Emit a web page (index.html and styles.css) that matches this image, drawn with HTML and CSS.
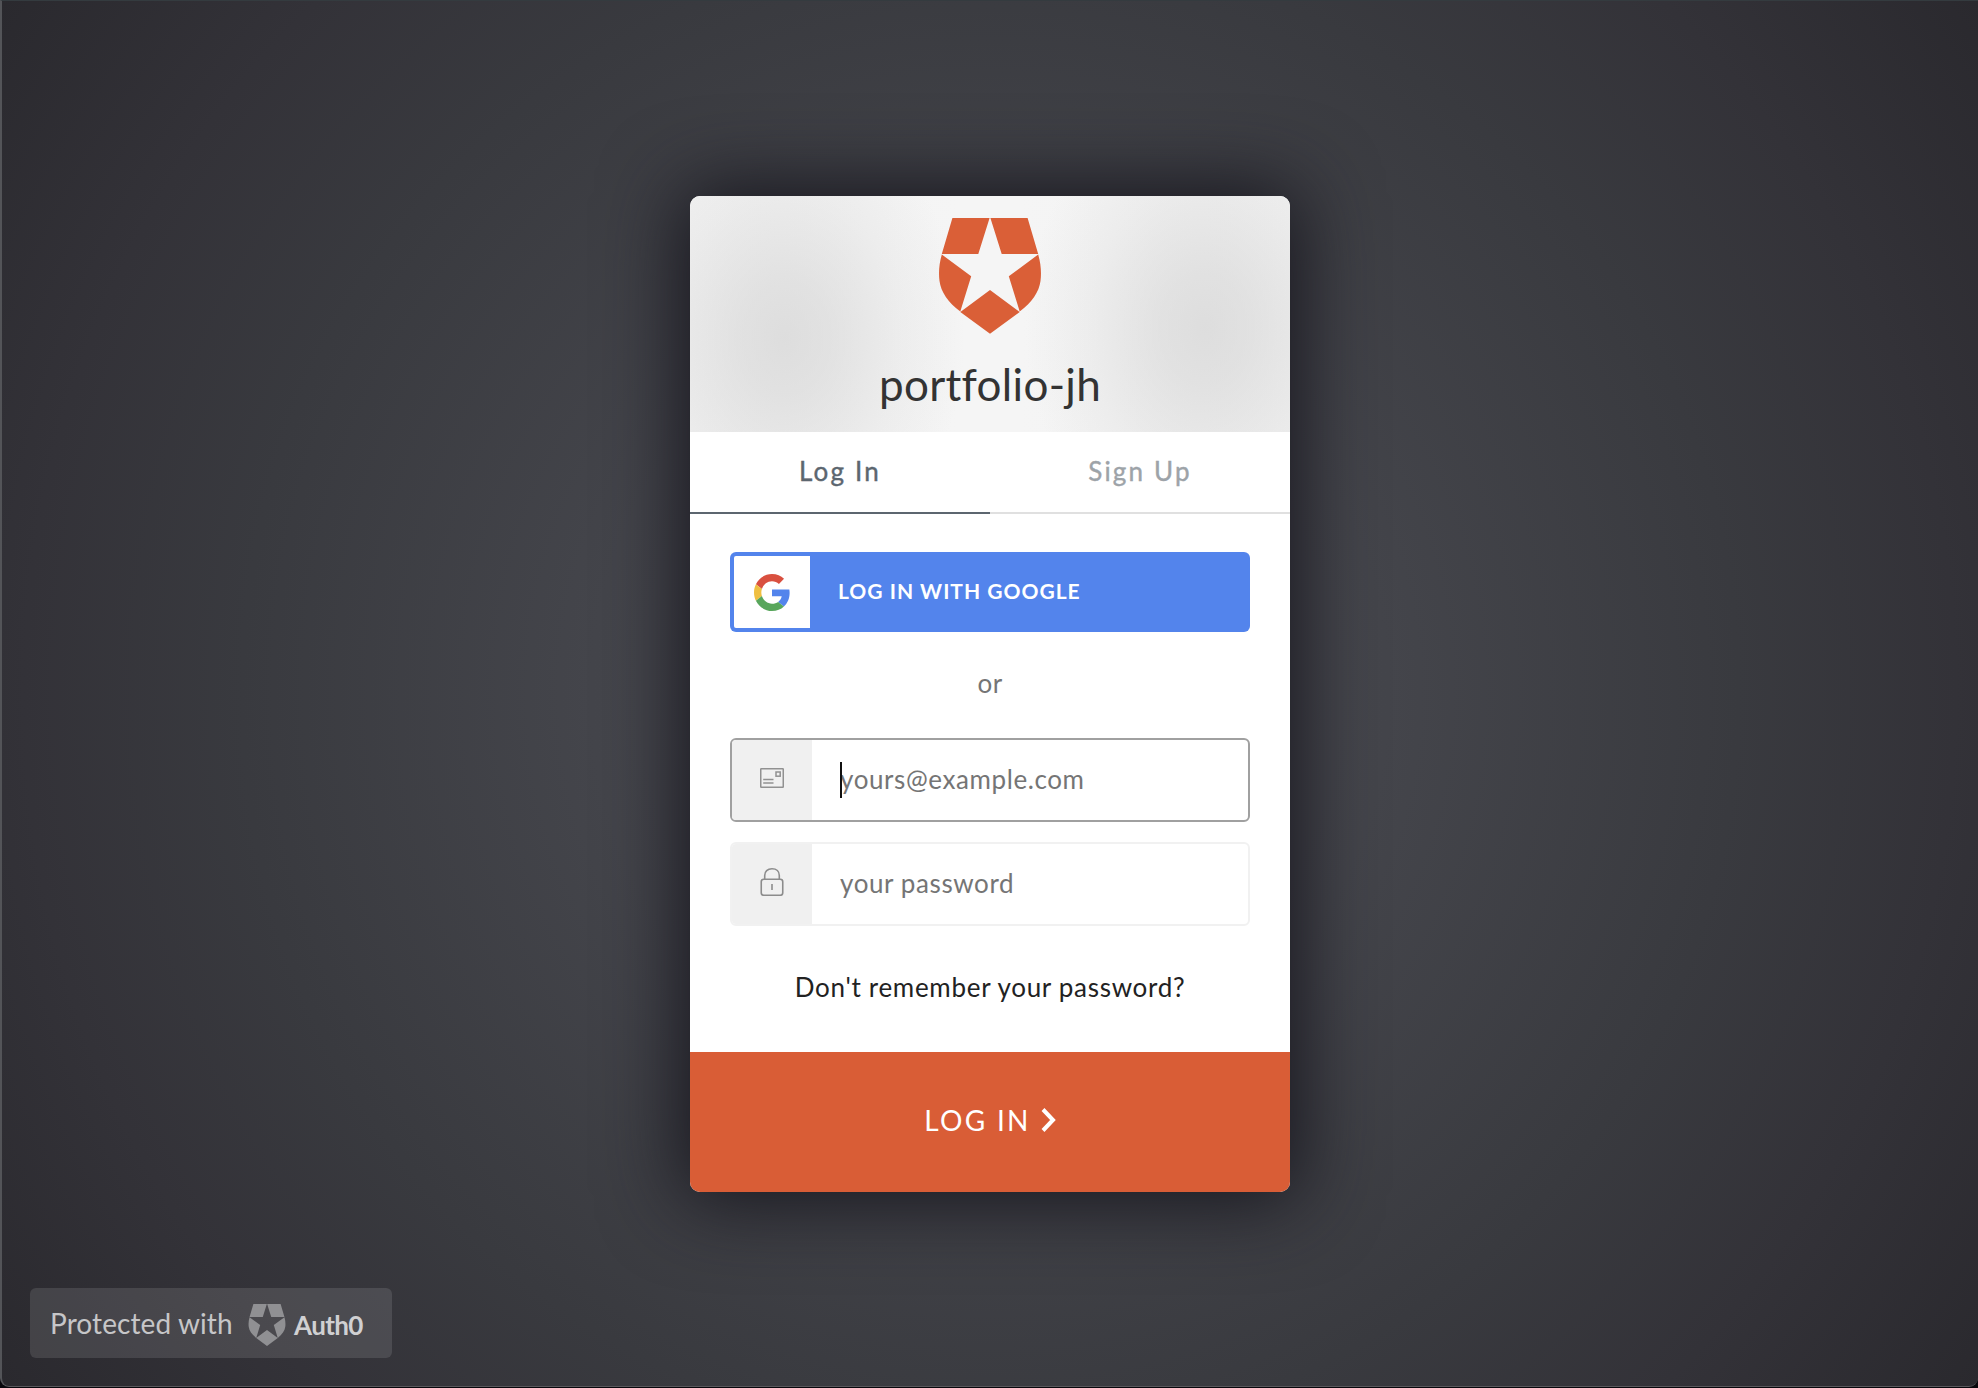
FILE: index.html
```html
<!DOCTYPE html>
<html lang="en">
<head>
<meta charset="utf-8">
<title>portfolio-jh</title>
<link rel="stylesheet" href="styles.css">
</head>
<body>
<svg class="defs" width="0" height="0" aria-hidden="true">
  <symbol id="shield" viewBox="0 0 102 116">
    <path d="M13.400 0H50.600L39.300 36H2.800ZM88.600 0H51.400L62.700 36H99.200ZM2.800 36.400L32.200 58.300L21.300 93.600C9 84.500 2 74 .5 63C-.5 55 0 46 2.800 36.400ZM99.200 36.400L69.800 58.300L80.700 93.600C93 84.500 100 74 101.500 63C102.500 55 102 46 99.200 36.400ZM51 72L80.700 94L51 115.800L21.300 94Z"/>
  </symbol>
</svg>
<div class="page">
  <main class="card">
    <header class="card-header">
      <svg class="logo" width="102" height="116"><use href="#shield"/></svg>
      <h1 class="title">portfolio-jh</h1>
    </header>
    <nav class="tabs">
      <a class="tab tab-active"><span>Log In</span></a>
      <a class="tab"><span>Sign Up</span></a>
    </nav>
    <form class="form">
      <button class="google" type="button">
        <span class="google-icon">
          <svg width="36" height="37" viewBox="0 0 48 48" preserveAspectRatio="none">
            <path fill="#d9503f" d="M24 9.500c3.540 0 6.710 1.220 9.210 3.600l6.850-6.850C35.900 2.380 30.470 0 24 0 14.620 0 6.510 5.380 2.560 13.220l7.980 6.190C12.430 13.720 17.740 9.500 24 9.500z"/>
            <path fill="#5384ec" d="M47.500 24.550c0-1.570-.15-3.090-.38-4.550H24v9.020h12.940c-.58 2.960-2.260 5.480-4.780 7.180l7.730 6c4.510-4.180 7.610-10.360 7.610-17.650z"/>
            <path fill="#efbf41" d="M10.530 28.590c-.48-1.450-.76-2.990-.76-4.590s.27-3.140.76-4.590l-7.980-6.190C.92 16.460 0 20.120 0 24c0 3.880.92 7.540 2.560 10.780l7.970-6.190z"/>
            <path fill="#58a65c" d="M24 48c6.480 0 11.930-2.130 15.890-5.810l-7.730-6c-2.150 1.450-4.920 2.300-8.160 2.300-6.260 0-11.570-4.220-13.470-9.910l-7.980 6.190C6.510 42.620 14.620 48 24 48z"/>
          </svg>
        </span>
        <span class="google-label">LOG IN WITH GOOGLE</span>
      </button>
      <p class="or"><span>or</span></p>
      <label class="field field-focus">
        <span class="field-icon">
          <svg width="24" height="20" viewBox="0 0 24 20" fill="none" stroke="#919191" stroke-width="1.500">
            <rect x=".75" y=".75" width="22.500" height="18.500" rx=".5"/>
            <rect x="16" y="4" width="4.200" height="4.200"/>
            <path d="M3.200 11.500H13.500M3.200 15H13.500"/>
          </svg>
        </span>
        <span class="field-body">
          <input class="input input-email" type="email" placeholder="yours@example.com">
          <span class="caret"></span>
        </span>
      </label>
      <label class="field">
        <span class="field-icon">
          <svg width="24" height="28" viewBox="0 0 24 28" fill="none" stroke="#8c8c8c" stroke-width="1.600">
            <rect x="1.250" y="11.250" width="21.500" height="16" rx="2.500"/>
            <path d="M4.700 11V7.500C4.700 3.500 7.500 .8 12 .8S19.300 3.500 19.300 7.500V11"/>
            <path d="M12 16V22"/>
          </svg>
        </span>
        <span class="field-body">
          <input class="input input-password" type="password" placeholder="your password">
        </span>
      </label>
      <p class="forgot"><span>Don't remember your password?</span></p>
    </form>
    <button class="submit" type="button">
      <span class="submit-label">LOG IN</span>
      <svg width="15" height="24" viewBox="0 0 15 24" fill="none" stroke="#fff" stroke-width="4"><path d="M2 1.500L12 12L2 22.500"/></svg>
    </button>
  </main>
  <footer class="badge">
    <span class="badge-text">Protected with</span>
    <svg class="badge-logo" width="38" height="42"><use href="#shield"/></svg>
    <span class="badge-name">Auth0</span>
  </footer>
</div>
</body>
</html>
```
FILE: styles.css
```css
* { box-sizing: border-box; }
html { background: #08070c; }
body {
  margin: 0;
  font-family: Lato, "Noto Sans", sans-serif;
  font-size: 26px;
}
.defs { position: absolute; }
.page {
  width: 1978px;
  height: 1387px;
  padding-top: 195px;
  border-left: 2px solid #535458;
  border-top: 1px solid #343b3f;
  border-bottom: 1px solid #59585c;
  border-radius: 0 0 9px 9px;
  background: radial-gradient(circle at center, #4c4d52 0%, #44454b 33%, #393a3f 62%, #333238 80%, #2a292e 100%);
}
.card {
  width: 600px;
  height: 996px;
  margin-left: 688px;
  display: flex;
  flex-direction: column;
  border-radius: 10px;
  overflow: hidden;
  background: #fff;
  box-shadow: 0 0 80px 8px #16151d;
}
.card-header {
  height: 236px;
  padding-top: 22px;
  display: flex;
  flex-direction: column;
  align-items: center;
  background:
    radial-gradient(ellipse 180px 230px at 95px 142px, rgba(208, 208, 208, .62), rgba(208, 208, 208, .5) 25%, rgba(208, 208, 208, .2) 65%, rgba(208, 208, 208, 0)),
    radial-gradient(ellipse 180px 230px at 515px 132px, rgba(208, 208, 208, .62), rgba(208, 208, 208, .5) 25%, rgba(208, 208, 208, .2) 65%, rgba(208, 208, 208, 0)),
    linear-gradient(90deg, #f2f2f2, #f5f5f5 45%, #f5f5f5 55%, #f2f2f2);
}
.logo { fill: #da5f37; flex: none; }
.title {
  margin: 23px 0 0;
  font-size: 44px;
  line-height: 54px;
  font-weight: 400;
  letter-spacing: .3px;
  color: #333;
}
.tabs { display: flex; height: 82px; }
.tab {
  flex: 1;
  display: flex;
  justify-content: center;
  border-bottom: 2px solid #e0e0e0;
  line-height: 79px;
  letter-spacing: 2.200px;
  color: #9da3a8;
  -webkit-text-stroke: .4px currentColor;
}
.tab-active { color: #5c666f; border-color: #5c666f; }
.form { height: 538px; padding: 38px 40px 0; }
.google {
  display: flex;
  width: 520px;
  height: 80px;
  padding: 4px;
  border: 0;
  border-radius: 6px;
  background: #5384ec;
  color: #fff;
  font: 700 21px/70px Lato, sans-serif;
}
.google-icon {
  width: 76px;
  height: 72px;
  display: flex;
  align-items: center;
  justify-content: center;
  border-radius: 2px 0 0 2px;
  background: #fff;
}
.google-label { margin-left: 28px; letter-spacing: 1px; }
.or {
  margin: 0;
  height: 106px;
  line-height: 102px;
  text-align: center;
  letter-spacing: .5px;
  color: #757575;
}
.field {
  display: flex;
  height: 84px;
  margin-bottom: 20px;
  border: 2px solid #f1f1f1;
  border-radius: 6px;
  overflow: hidden;
}
.field-focus { border-color: #a0a0a0; }
.field-icon {
  width: 80px;
  display: flex;
  align-items: center;
  justify-content: center;
  padding-bottom: 4px;
  background: #f0f0f0;
}
.field-body { position: relative; flex: 1; display: flex; }
.input {
  flex: 1;
  padding: 0 0 3px 28px;
  border: 0;
  outline: 0;
  background: transparent;
  font: 400 26px Lato, sans-serif;
  letter-spacing: .6px;
}
.input::placeholder { color: #757575; opacity: 1; }
.caret {
  position: absolute;
  left: 28px;
  top: 22px;
  width: 2px;
  height: 36px;
  background: #111;
}
.forgot {
  margin: 0;
  padding-top: 21px;
  line-height: 40px;
  text-align: center;
  letter-spacing: .7px;
  color: #222;
}
.submit {
  height: 140px;
  display: flex;
  align-items: center;
  justify-content: center;
  gap: 10px;
  padding: 0 0 5px;
  border: 0;
  background: #d95d36;
  color: #fff;
  font: 400 28px Lato, sans-serif;
}
.submit-label { letter-spacing: 2.300px; }
.badge {
  display: flex;
  align-items: center;
  width: 362px;
  height: 70px;
  margin: 96px 0 0 28px;
  padding-left: 20px;
  border-radius: 6px;
  background: rgba(255, 255, 255, .115);
  color: #c6c6c8;
  font-size: 28px;
}
.badge-text { width: 182px; white-space: nowrap; letter-spacing: .1px; padding-bottom: 1px; }
.badge-logo { margin: 4px 8px 0 16px; fill: #909093; }
.badge-name { font-size: 26px; font-weight: 700; letter-spacing: -.6px; color: #d0d0d2; padding-top: 3px; }
```
